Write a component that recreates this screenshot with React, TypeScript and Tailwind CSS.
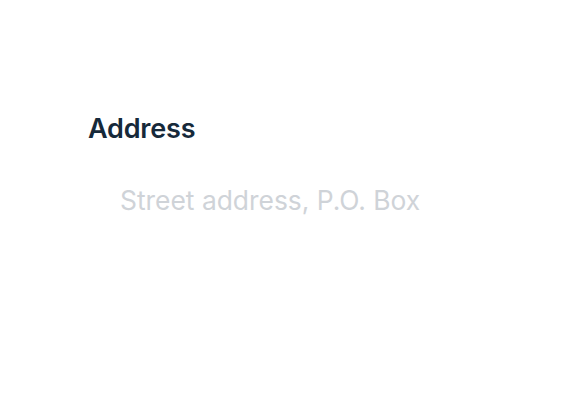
import React from "react";

export default function App() {
  return (
    <main className="min-h-[400px] w-[580px] bg-white font-['Inter','Liberation_Sans',sans-serif]">
      <div className="px-[88px] pt-[111px]">
        <label htmlFor="address" className="block text-[27px] font-semibold leading-[36px] text-[#16293a] tracking-[-0.2px]">
          Address
        </label>
        <input
          id="address"
          type="text"
          placeholder="Street address, P.O. Box"
          className="mt-[35px] block w-full bg-transparent pl-[32px] text-[26.4px] leading-[36px] text-[#16293a] outline-none placeholder:text-[#cfd3d8]"
        />
      </div>
    </main>
  );
}
